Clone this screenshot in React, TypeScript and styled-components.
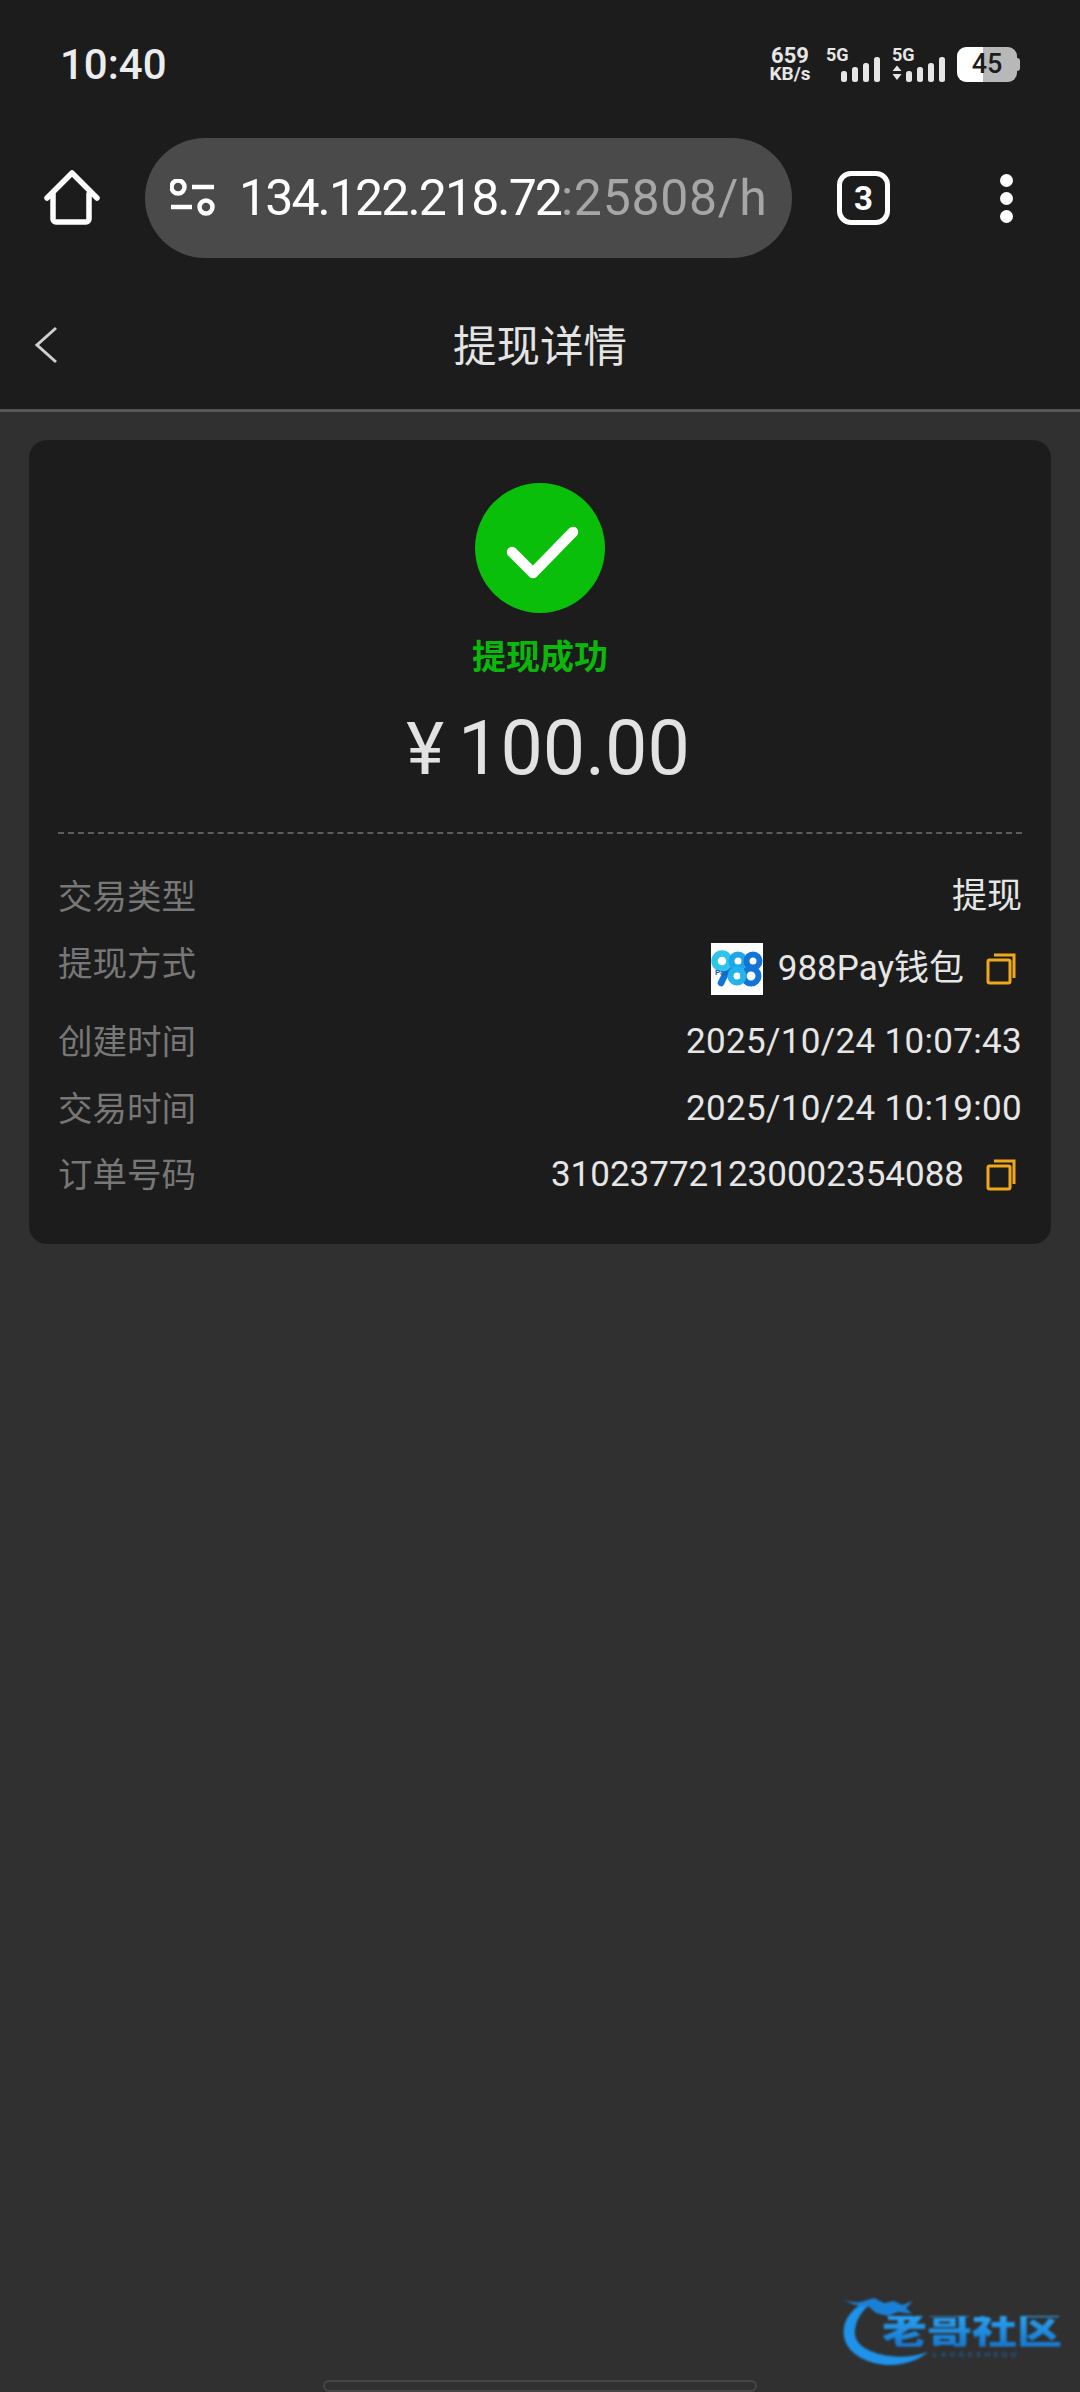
import React from "react";
import styled, { createGlobalStyle } from "styled-components";

const Global = createGlobalStyle`
  html, body { margin: 0; padding: 0; background: #303030; }
  #root { width: 1080px; height: 2392px; }
  * { box-sizing: border-box; }
`;

const Page = styled.div`
  position: relative;
  width: 1080px;
  height: 2392px;
  overflow: hidden;
  background: #303030;
  font-family: Roboto, "Noto Sans CJK SC", sans-serif;
  display: flex;
  flex-direction: column;
`;

const TopArea = styled.div`
  background: #1c1c1c;
  height: 412px;
  border-bottom: 3px solid #575757;
  display: flex;
  flex-direction: column;
`;

const StatusBar = styled.div`
  height: 128px;
  padding: 0 60px 0 60px;
  display: flex;
  align-items: center;
  justify-content: space-between;
`;

const Clock = styled.div`
  font-size: 42px;
  font-weight: 500;
  color: #ececec;
  line-height: 1;
  margin-top: 2px;
`;

const StatusIcons = styled.div`
  display: flex;
  align-items: flex-end;
  height: 36px;
  margin-right: 3px;
`;

const Speed = styled.div`
  width: 46px;
  margin-right: 13px;
  display: flex;
  flex-direction: column;
  align-items: center;
  font-weight: 700;
  color: #e6e6e6;
`;
const SpeedValue = styled.span`
  font-size: 22px;
  line-height: 20px;
`;
const SpeedUnit = styled.span`
  font-size: 19px;
  line-height: 16px;
`;

const Signal = styled.div<{ $w: number }>`
  width: ${(p) => p.$w}px;
  height: 36px;
  margin-right: 8px;
  display: flex;
  flex-direction: column;
`;
const NetLabel = styled.span`
  font-size: 18px;
  line-height: 18px;
  font-weight: 700;
  color: #e6e6e6;
`;
const SignalBars = styled.svg`
  display: block;
  margin-top: -7px;
`;

const Battery = styled.div`
  position: relative;
  width: 60px;
  height: 35px;
  border-radius: 9px;
  background: linear-gradient(90deg, #ffffff 0 26px, #b8b8b8 26px 100%);
  color: #1c1c1c;
  font-size: 27px;
  font-weight: 500;
  line-height: 35px;
  text-align: center;
  &::after {
    content: "";
    position: absolute;
    right: -3px;
    top: 11px;
    width: 3px;
    height: 13px;
    border-radius: 0 3px 3px 0;
    background: #b8b8b8;
  }
`;

const Toolbar = styled.div`
  height: 140px;
  display: flex;
  align-items: center;
`;

const HomeSlot = styled.div`
  width: 145px;
  display: flex;
  padding-left: 43px;
`;

const UrlPill = styled.div`
  width: 647px;
  height: 120px;
  border-radius: 60px;
  background: #4a4a4a;
  display: flex;
  align-items: center;
  padding-left: 25px;
  overflow: hidden;
`;

const UrlText = styled.div`
  margin-left: 23px;
  font-size: 50px;
  line-height: 1;
  letter-spacing: -1.9px;
  white-space: nowrap;
  color: #ffffff;
`;
const UrlMuted = styled.span`
  color: #a6a6a6;
  letter-spacing: 0.7px;
`;

const TabsSlot = styled.div`
  margin-left: 45px;
  width: 53px;
  height: 54px;
  border: 5px solid #fff;
  border-radius: 14px;
  display: flex;
  align-items: center;
  justify-content: center;
  color: #fff;
  font-size: 33px;
  font-weight: 700;
`;

const MenuDots = styled.div`
  margin-left: 110px;
  display: flex;
  flex-direction: column;
  gap: 5px;
`;
const Dot = styled.span`
  width: 13px;
  height: 13px;
  border-radius: 50%;
  background: #fff;
`;

const NavBar = styled.div`
  flex: 1;
  display: flex;
  align-items: center;
  justify-content: center;
  position: relative;
  padding-top: 18px;
`;
const BackBtn = styled.div`
  position: absolute;
  left: 33px;
  top: 58px;
  display: flex;
`;
const NavTitle = styled.div`
  font-size: 43.5px;
  color: #e4e4e4;
  line-height: 1;
`;

const Card = styled.div`
  margin: 28px 29px 0 29px;
  height: 804px;
  background: #1c1c1c;
  border-radius: 18px;
  padding: 43px 29px 0;
  display: flex;
  flex-direction: column;
  align-items: stretch;
`;

const Hero = styled.div`
  display: flex;
  flex-direction: column;
  align-items: center;
`;

const CheckCircle = styled.svg`
  display: block;
`;

const StatusText = styled.div`
  margin-top: 21px;
  font-size: 34px;
  line-height: 46px;
  font-weight: 700;
  color: #0ab80a;
`;

const Amount = styled.div`
  margin-top: 26px;
  margin-left: 16px;
  display: flex;
  align-items: baseline;
  font-size: 75.4px;
  line-height: 84px;
  color: #e2e2e2;
`;
const Currency = styled.span`
  font-size: 72px;
  margin-right: 14px;
`;

const Divider = styled.div`
  margin-top: 40px;
  border-top: 2px dashed #5c5c5c;
`;

const Rows = styled.div`
  margin-top: 40px;
  display: flex;
  flex-direction: column;
  gap: 20.5px;
`;

const Row = styled.div<{ $tall?: boolean }>`
  display: flex;
  justify-content: space-between;
  align-items: flex-start;
  min-height: ${(p) => (p.$tall ? 58 : 46)}px;
`;
const Label = styled.div`
  font-size: 34.5px;
  line-height: 46px;
  color: #777777;
`;
const Value = styled.div`
  display: flex;
  align-items: center;
  height: 46px;
  font-size: 35px;
  line-height: 46px;
  color: #e6e6e6;
  white-space: nowrap;
`;
const DateValue = styled(Value)`
  letter-spacing: 0.32px;
`;
const LogoValue = styled(Value)`
  height: 52px;
  margin-top: 2px;
`;
const LogoBox = styled.div`
  width: 52px;
  height: 52px;
  background: #fff;
  margin-right: 15px;
  display: flex;
`;
const CopyBtn = styled.div`
  margin-left: 22px;
  margin-right: 6px;
  width: 30px;
  height: 32px;
  display: flex;
`;

const Watermark = styled.div`
  position: absolute;
  left: 840px;
  top: 2296px;
  width: 230px;
  height: 80px;
  filter: blur(0.8px);
`;
const WatermarkArc = styled.svg`
  position: absolute;
  left: 0;
  top: 0;
`;
const WatermarkTitle = styled.div`
  position: absolute;
  left: 42px;
  top: 20px;
  font-size: 45px;
  line-height: 36px;
  font-weight: 900;
  white-space: nowrap;
  background: linear-gradient(180deg, #2aa0f0, #1577d0);
  -webkit-background-clip: text;
  background-clip: text;
  color: transparent;
  transform: scaleY(0.85);
  transform-origin: top left;
`;
const WatermarkSub = styled.div`
  position: absolute;
  left: 93px;
  top: 55px;
  font-size: 8px;
  line-height: 8px;
  letter-spacing: 3.6px;
  color: #1a6db8;
  white-space: nowrap;
`;

const GestureBar = styled.div`
  position: absolute;
  left: 323px;
  bottom: 0;
  width: 434px;
  height: 12px;
  border: 2px solid #454545;
  border-radius: 6px;
`;

const Bars = ({ x }: { x: number }) => (
  <>
    <rect x={x} y="14" width="6" height="11" rx="2.5" fill="#e6e6e6" />
    <rect x={x + 11} y="10" width="6" height="15" rx="2.5" fill="#e6e6e6" />
    <rect x={x + 22} y="6" width="6" height="19" rx="2.5" fill="#e6e6e6" />
    <rect x={x + 33} y="0" width="6" height="25" rx="2.5" fill="#e6e6e6" />
  </>
);

const HomeIcon = () => (
  <svg width="58" height="60" viewBox="0 0 58 60" fill="none" stroke="#fff" strokeWidth="5.5" strokeLinejoin="round" strokeLinecap="round">
    <path d="M4 30 L29 5 L54 30" />
    <path d="M10 26 V51 a3 3 0 0 0 3 3 H43 a3 3 0 0 0 3 -3 V26" />
  </svg>
);

const TuneIcon = () => (
  <svg width="46" height="38" viewBox="0 0 46 38" fill="none" stroke="#fff" strokeWidth="4.5">
    <circle cx="8" cy="8" r="6.5" />
    <path d="M22 8 H44" />
    <path d="M1 28 H22" />
    <circle cx="36" cy="28" r="6.5" />
  </svg>
);

const CopyIcon = () => (
  <svg width="30" height="32" viewBox="0 0 30 32" fill="none" stroke="#f0a818" strokeWidth="3">
    <rect x="2" y="7" width="22" height="23" rx="1.5" />
    <path d="M8 2 H28 V25" />
  </svg>
);

const PayLogo = () => (
  <svg width="52" height="52" viewBox="0 0 52 52" fill="none">
    <path d="M18 24 L10 40" stroke="#1274d8" strokeWidth="6.5" strokeLinecap="round" />
    <circle cx="11" cy="18" r="7.5" stroke="#2fc4ea" strokeWidth="6.5" />
    <circle cx="27" cy="18" r="6.5" stroke="#1fa6e8" strokeWidth="6" />
    <circle cx="42" cy="18" r="6.5" stroke="#1274d8" strokeWidth="6" />
    <circle cx="40" cy="33" r="7.5" stroke="#1274d8" strokeWidth="6" />
    <circle cx="26" cy="33" r="6.5" stroke="#23b4ea" strokeWidth="6" />
    <text x="4" y="32" fontFamily="Roboto, sans-serif" fontSize="8" fontWeight="700" fill="#1a5fb0">Pay</text>
  </svg>
);

const dateRows = [
  { label: "创建时间", value: "2025/10/24 10:07:43" },
  { label: "交易时间", value: "2025/10/24 10:19:00" },
];

export default function App() {
  return (
    <Page>
      <Global />
      <TopArea>
        <StatusBar>
          <Clock>10:40</Clock>
          <StatusIcons>
            <Speed>
              <SpeedValue>659</SpeedValue>
              <SpeedUnit>KB/s</SpeedUnit>
            </Speed>
            <Signal $w={58}>
              <NetLabel>5G</NetLabel>
              <SignalBars width="58" height="25" viewBox="0 0 58 25">
                <Bars x={15} />
              </SignalBars>
            </Signal>
            <Signal $w={57}>
              <NetLabel>5G</NetLabel>
              <SignalBars width="57" height="25" viewBox="0 0 57 25">
                <path d="M0.5 14 L5 8.5 L9.5 14 Z M0.5 17 L9.5 17 L5 23 Z" fill="#e6e6e6" />
                <Bars x={14} />
              </SignalBars>
            </Signal>
            <Battery>45</Battery>
          </StatusIcons>
        </StatusBar>
        <Toolbar>
          <HomeSlot>
            <HomeIcon />
          </HomeSlot>
          <UrlPill>
            <TuneIcon />
            <UrlText>
              134.122.218.72<UrlMuted>:25808/h</UrlMuted>
            </UrlText>
          </UrlPill>
          <TabsSlot>3</TabsSlot>
          <MenuDots>
            <Dot />
            <Dot />
            <Dot />
          </MenuDots>
        </Toolbar>
        <NavBar>
          <BackBtn>
            <svg width="26" height="38" viewBox="0 0 26 38" fill="none" stroke="#d0d0d0" strokeWidth="3">
              <path d="M23 2 L4 19 L23 36" />
            </svg>
          </BackBtn>
          <NavTitle>提现详情</NavTitle>
        </NavBar>
      </TopArea>
      <Card>
        <Hero>
          <CheckCircle width="130" height="130" viewBox="0 0 130 130" fill="none">
            <circle cx="65" cy="65" r="65" fill="#0abf0a" />
            <path d="M37 69 L58 90 L98 49" stroke="#fff" strokeWidth="10.5" strokeLinecap="round" strokeLinejoin="round" />
          </CheckCircle>
          <StatusText>提现成功</StatusText>
          <Amount>
            <Currency>¥</Currency>100.00
          </Amount>
        </Hero>
        <Divider />
        <Rows>
          <Row>
            <Label>交易类型</Label>
            <Value>提现</Value>
          </Row>
          <Row $tall>
            <Label>提现方式</Label>
            <LogoValue>
              <LogoBox>
                <PayLogo />
              </LogoBox>
              988Pay钱包
              <CopyBtn>
                <CopyIcon />
              </CopyBtn>
            </LogoValue>
          </Row>
          {dateRows.map((r) => (
            <Row key={r.label}>
              <Label>{r.label}</Label>
              <DateValue>{r.value}</DateValue>
            </Row>
          ))}
          <Row>
            <Label>订单号码</Label>
            <Value>
              310237721230002354088
              <CopyBtn>
                <CopyIcon />
              </CopyBtn>
            </Value>
          </Row>
        </Rows>
      </Card>
      <Watermark>
        <WatermarkArc width="120" height="80" viewBox="0 0 120 80" fill="none">
          <path d="M23 7 C8 16 2 28 4 40 C6 58 30 70 53 69 C68 68 80 63 88 56 C76 60 62 62 50 60 C28 57 13 48 15 34 C16 24 22 14 30 9 Z" fill="#1f93ea" />
          <path d="M3 3 C10 7 18 7 24 5 L34 2 L44 7 L54 5 L62 9 L73 5 L66 12 L72 18 L58 16 L48 20 L36 17 L28 10 C20 11 10 8 3 3 Z" fill="#1a80d6" />
        </WatermarkArc>
        <WatermarkTitle>老哥社区</WatermarkTitle>
        <WatermarkSub>LAOGESHEQU</WatermarkSub>
      </Watermark>
      <GestureBar />
    </Page>
  );
}
